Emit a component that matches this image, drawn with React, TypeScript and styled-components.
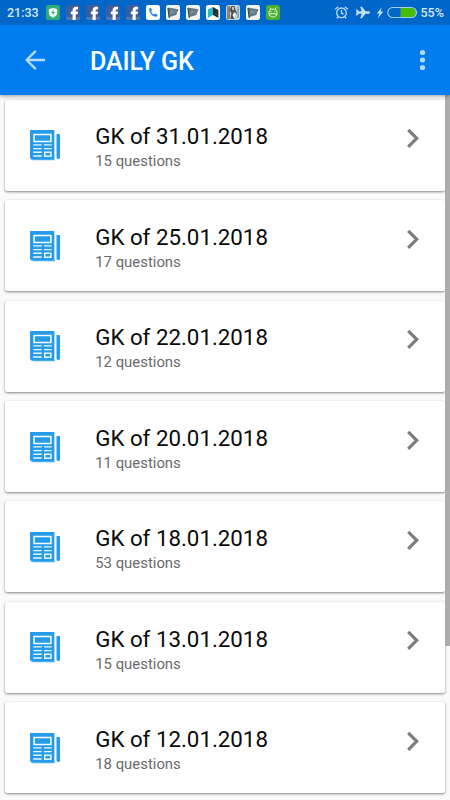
import React from 'react';
import styled, { createGlobalStyle } from 'styled-components';

const GlobalStyle = createGlobalStyle`
  * { box-sizing: border-box; }
  body { margin: 0; background: #fafafa; font-family: Roboto, "Liberation Sans", sans-serif; }
`;

const Screen = styled.div`
  position: relative;
  width: 450px;
  height: 800px;
  overflow: hidden;
  background: #fafafa;
`;

const Header = styled.header`
  position: relative;
  z-index: 1;
  height: 95px;
  background: #007ef0;
  box-shadow: 0 1px 4px rgba(0, 0, 0, 0.4);
`;

const StatusBar = styled.div`
  display: flex;
  align-items: center;
  height: 25px;
  padding-left: 7px;
  background: #0067c8;
  color: #d5e7f8;
`;

const StatusText = styled.span<{ $width: number }>`
  width: ${(p) => p.$width}px;
  font-size: 12.5px;
  line-height: 25px;
  font-weight: 500;
  white-space: nowrap;
`;

const Notices = styled.div`
  display: flex;
  flex: 1;
  gap: 6px;
  svg { display: block; width: 14px; height: 15px; }
`;

const SystemIcons = styled.div`
  display: flex;
  align-items: center;
  svg { display: block; }
`;

const Toolbar = styled.div`
  display: flex;
  align-items: center;
  height: 70px;
  padding: 0 20px 0 25px;
  svg { display: block; }
`;

const Title = styled.h1`
  flex: 1;
  margin: 4px 0 0 45px;
  color: #fff;
  font-size: 25px;
  line-height: 30px;
  font-weight: 500;
  letter-spacing: -0.1px;
`;

const List = styled.main`
  display: flex;
  flex-direction: column;
  gap: 9.45px;
  padding: 4.7px 5px 0;
`;

const Card = styled.article`
  display: flex;
  flex: none;
  height: 91px;
  padding: 0 25px;
  border-radius: 2.5px;
  background: #fff;
  box-shadow: 0 1px 2.5px rgba(0, 0, 0, 0.48);
`;

const PaperIcon = styled.svg`
  width: 31px;
  height: 31px;
  margin-top: 30.5px;
`;

const CardText = styled.div`
  flex: 1;
  margin-left: 34.2px;
  padding-top: 22.7px;
`;

const CardTitle = styled.h2`
  margin: 0;
  color: #0a0a0a;
  font-size: 22.3px;
  line-height: 29px;
  font-weight: 400;
`;

const CardCount = styled.p`
  margin: 0;
  color: #6a6a6a;
  font-size: 14.9px;
  line-height: 20px;
`;

const Chevron = styled.svg`
  width: 14px;
  height: 21px;
  margin-top: 28.5px;
`;

const ScrollThumb = styled.div`
  position: absolute;
  top: 95px;
  right: 0;
  width: 5px;
  height: 551px;
  background: #adadad;
`;

type Notice = 'shield' | 'facebook' | 'phone' | 'flag' | 'book' | 'photo' | 'robot';

const notices: Notice[] = [
  'shield', 'facebook', 'facebook', 'facebook', 'facebook',
  'phone', 'flag', 'flag', 'book', 'photo', 'flag', 'robot',
];

const tileColor: Record<Notice, string> = {
  shield: '#2dac79', facebook: '#3d5c9c', phone: '#fff', flag: '#f4f7fa',
  book: '#fff', photo: '#c8d4dc', robot: '#48ae32',
};

function NoticeArt({ kind }: { kind: Notice }) {
  switch (kind) {
    case 'shield':
      return (
        <>
          <path d="M7 2.8 11.2 4.2v3.5c0 2.4-1.7 3.9-4.2 5-2.5-1.1-4.2-2.6-4.2-5V4.2Z" fill="#f3fff8" />
          <path d="M7.8 4.7 5 8h2l-.7 2.3L9.2 7H7.3Z" fill="#2dac79" />
        </>
      );
    case 'facebook':
      return (
        <>
          <path d="M0 12h14v1.4q0 1.6-1.6 1.6H1.6Q0 15 0 13.4Z" fill="#5474b2" />
          <path d="M6.6 15V9.2H4.8V6.5h1.8V5.2c0-2.2 1.3-3.4 3.4-3.4h2v2.6h-1.3c-.8 0-1 .4-1 1.1v1H12l-.4 2.7H9.7V15Z" fill="#fff" />
        </>
      );
    case 'phone':
      return <path d="M3.4 3.2 5 2.9l1 2.4-1 1.1c.7 1.5 1.6 2.5 3 3.2l1.2-1 2.3 1.1-.3 1.8c-3.9 1.1-8.7-3.5-7.8-8.3Z" fill="#207ff0" />;
    case 'flag':
      return (
        <>
          <path d="M1.7 2.5 12.5 4.3 10.2 10 3 12.3Z" fill="#657985" />
          <path d="m2 3 1.2 10" stroke="#344b59" strokeWidth="1.2" />
          <path d="m4.5 8.8 1.7-3 1 2.3 2.5-2.4" fill="none" stroke="#93a9b3" strokeWidth=".8" />
        </>
      );
    case 'book':
      return (
        <>
          <path d="M1.8 4.6 7 2v8l-5.2 3Z" fill="#24bdc6" />
          <path d="m7 2 5.4 3v8L7 10Z" fill="#293237" />
        </>
      );
    case 'photo':
      return (
        <>
          <path d="M1 1h3v13H1Z" fill="#9a8070" />
          <path d="M5.5 1h3l1 4 1.6 3-2.6 6H4.4l1-6-2-3Z" fill="#465461" />
          <path d="M6 2h2v3H6Z" fill="#e2b699" />
          <path d="m8.5 7 2 2-2 5-2-4Z" fill="#eef4f6" />
          <path d="M11.5 2h1.2v11h-1.2Z" fill="#6d98ad" />
        </>
      );
    case 'robot':
      return (
        <g fill="none" stroke="#e6f8d9" strokeWidth="1">
          <path d="M3 7.5c0-4.6 8-4.6 8 0v1c0 4.6-8 4.6-8 0Z" />
          <path d="m3.5 2.3 1.3 2m5.7-2-1.3 2M3.2 8.8h7.6M5.2 6.3v1m3.6-1v1" />
        </g>
      );
  }
}

function NoticeIcon({ kind }: { kind: Notice }) {
  return (
    <svg viewBox="0 0 14 15" aria-hidden="true">
      <rect width="14" height="15" rx="2.3" fill={tileColor[kind]} />
      <NoticeArt kind={kind} />
    </svg>
  );
}

function DeviceStatus() {
  return (
    <SystemIcons>
      <svg width="53" height="25" viewBox="0 0 53 25" fill="none" stroke="#b9d8f3">
        <circle cx="7.5" cy="12.8" r="4.8" strokeWidth="1.35" />
        <path d="m1.2 9.3 3-2.5m6.6 0 3 2.5M7.5 10v3.2l2 .8M4 17l-1.2 1.3M11 17l1.2 1.3" strokeWidth="1.35" />
        <path d="M36 12.5c0-.8-.7-1.3-1.5-1.3h-3L28 6.8h-1.8l1.5 4.4h-3L23.2 9.5h-1.4l.8 3-.8 3h1.4l1.5-1.7h3l-1.5 4.4H28l3.5-4.4h3c.8 0 1.5-.5 1.5-1.3Z" fill="#c3def5" stroke="none" />
        <path d="m48 7-5.2 6.4h2.5l-1.5 5 5.5-6.8h-2.8Z" fill="#c3def5" stroke="none" />
      </svg>
      <svg width="34" height="25" viewBox="0 0 34 25">
        <path d="M13.5 8H24q5 0 5 4.5t-5 4.5H13.5Z" fill="#46bd0b" />
        <rect x=".8" y="7.5" width="28.6" height="10" rx="5" fill="none" stroke="#a9cced" strokeWidth="1.1" />
        <path d="M29.4 10.5q2 2 0 4Z" fill="#a9cced" />
      </svg>
    </SystemIcons>
  );
}

function Newspaper() {
  return (
    <PaperIcon viewBox="0 0 31 31" aria-hidden="true">
      <path d="M0 0h25v30.5H4Q0 30.5 0 27Z" fill="#aadcfa" />
      <path d="M0 0h24v28.5q0 1.3 1.2 1.3H4Q0 29.8 0 26.5Z" fill="#269bea" />
      <path d="M26.5 4H29q1 0 1 1v22.5q0 1.5-1.8 1.5t-1.7-1.7Z" fill="#269bea" />
      <rect x="4.1" y="4.5" width="16.8" height="7" fill="none" stroke="#f7fcff" strokeWidth="1.5" />
      <path d="M3.3 14.9h8.4M3.3 18.6h8.4M3.3 22.3h8.4M3.3 26h8.4M14 14.9h7.7M14 18.6h7.7" stroke="#eef8ff" strokeWidth="1.4" />
      <rect x="14.7" y="22.2" width="6.2" height="4" fill="none" stroke="#f7fcff" strokeWidth="1.4" />
    </PaperIcon>
  );
}

const quizzes = [
  { date: '31.01.2018', questions: 15 },
  { date: '25.01.2018', questions: 17 },
  { date: '22.01.2018', questions: 12 },
  { date: '20.01.2018', questions: 11 },
  { date: '18.01.2018', questions: 53 },
  { date: '13.01.2018', questions: 15 },
  { date: '12.01.2018', questions: 18 },
];

export default function App() {
  return (
    <>
      <GlobalStyle />
      <Screen>
        <Header>
          <StatusBar>
            <StatusText $width={39}>21:33</StatusText>
            <Notices>{notices.map((kind, i) => <NoticeIcon key={i} kind={kind} />)}</Notices>
            <DeviceStatus />
            <StatusText $width={29.5}>55%</StatusText>
          </StatusBar>
          <Toolbar>
            <svg width="20" height="20" viewBox="0 0 20 20" fill="none" stroke="#b4d9fb" strokeWidth="2.4">
              <path d="M20 10H2M10.8.8 1.6 10l9.2 9.2" />
            </svg>
            <Title>DAILY GK</Title>
            <svg width="15" height="22" viewBox="0 0 15 22" fill="#b8dbfb">
              <circle cx="7.5" cy="3.5" r="2.6" />
              <circle cx="7.5" cy="11" r="2.6" />
              <circle cx="7.5" cy="18.5" r="2.6" />
            </svg>
          </Toolbar>
        </Header>
        <List>
          {quizzes.map((quiz) => (
            <Card key={quiz.date}>
              <Newspaper />
              <CardText>
                <CardTitle>GK of {quiz.date}</CardTitle>
                <CardCount>{quiz.questions} questions</CardCount>
              </CardText>
              <Chevron viewBox="0 0 14 21" fill="none" stroke="#7c7c7c" strokeWidth="3.2">
                <path d="m2.2 1.8 8.5 8.5-8.5 8.5" />
              </Chevron>
            </Card>
          ))}
        </List>
        <ScrollThumb />
      </Screen>
    </>
  );
}
